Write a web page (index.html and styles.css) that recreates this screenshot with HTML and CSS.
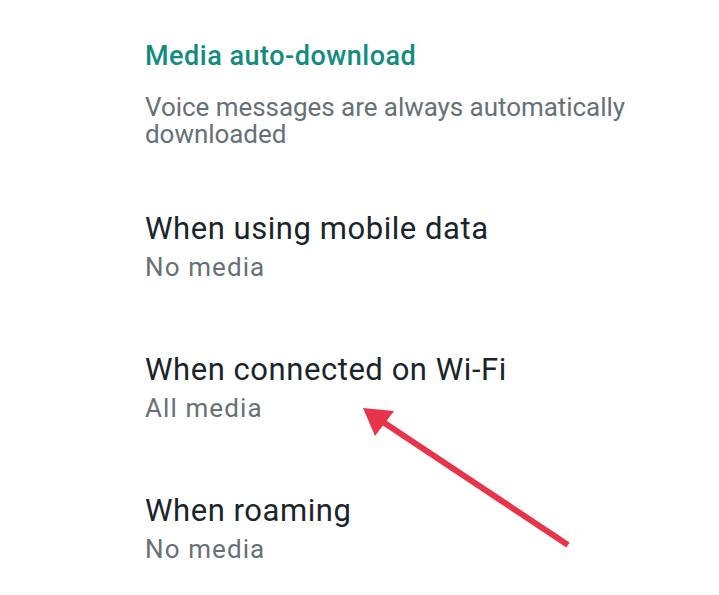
FILE: index.html
```html
<!DOCTYPE html>
<html lang="en">
<head>
    <meta charset="UTF-8">
    <meta name="viewport" content="width=device-width, initial-scale=1.0">
    <title>Media auto-download</title>
    <link rel="stylesheet" href="styles.css">
</head>
<body>
    <main class="settings">
        <section class="section-head">
            <h2 class="section-title">Media auto-download</h2>
            <p class="section-note">Voice messages are always automatically downloaded</p>
        </section>

        <div class="pref">
            <div class="pref-title">When using mobile data</div>
            <div class="pref-value">No media</div>
        </div>

        <div class="pref">
            <div class="pref-title">When connected on Wi-Fi</div>
            <div class="pref-value">All media</div>
        </div>

        <div class="pref">
            <div class="pref-title">When roaming</div>
            <div class="pref-value">No media</div>
        </div>
    </main>

    <!-- annotation arrow drawn on top of the screenshot -->
    <svg class="arrow" width="719" height="595" viewBox="0 0 719 595">
        <line x1="568" y1="545" x2="380" y2="420" stroke="#e8344b" stroke-width="6"/>
        <polygon points="363,408 394,411 375,436" fill="#e8344b"/>
    </svg>
</body>
</html>
```

FILE: styles.css
```css
:root {
    --teal: #128c7e;
    --text-dark: #1a252b;
    --text-muted: #667177;
}

* {
    margin: 0;
    padding: 0;
    box-sizing: border-box;
}

body {
    background-color: #fff;
    font-family: Roboto, "Noto Sans", sans-serif;
    position: relative;
}

.settings {
    padding: 39px 0 0 145px;
}

.section-head {
    width: 500px;
    margin-bottom: 62px;
}

.section-title {
    color: var(--teal);
    font-size: 27px;
    font-weight: 500;
    line-height: 34px;
    letter-spacing: 0.5px;
    margin-bottom: 21px;
}

.section-note {
    color: var(--text-muted);
    font-size: 26px;
    line-height: 27px;
    letter-spacing: -0.05px;
}

.pref {
    height: 141px;
}

.pref:last-child {
    height: auto;
}

.pref-title {
    color: var(--text-dark);
    font-size: 31px;
    line-height: 38px;
    letter-spacing: 0.55px;
    margin-bottom: 4px;
}

.pref-value {
    color: var(--text-muted);
    font-size: 26px;
    line-height: 30px;
    letter-spacing: 1.1px;
}

.arrow {
    position: absolute;
    top: 0;
    left: 0;
}
```
